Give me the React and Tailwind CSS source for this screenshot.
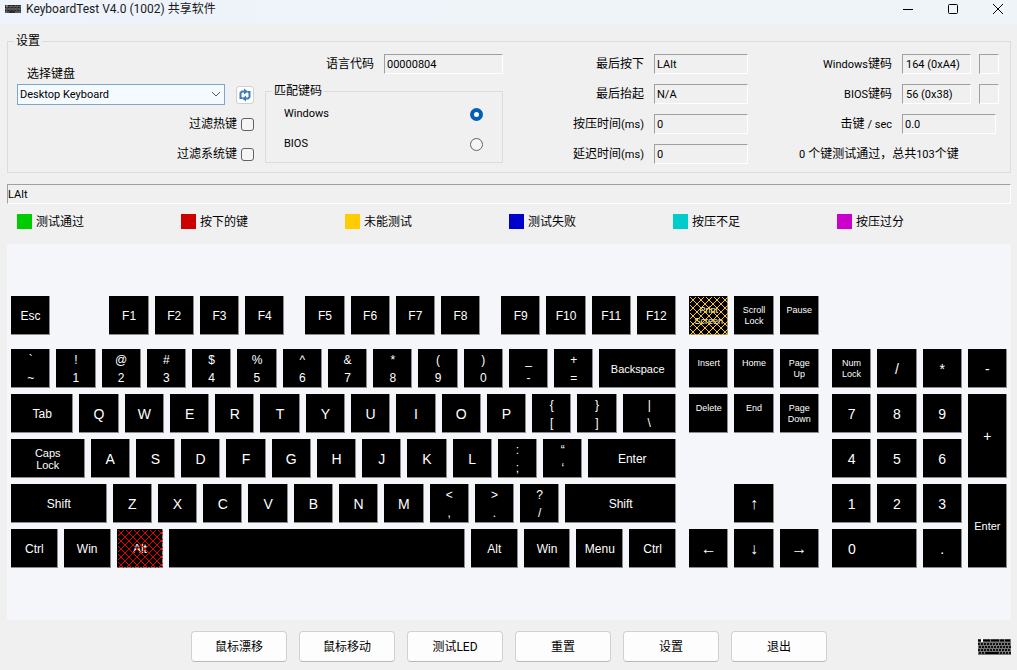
import { useState } from "react";
import clsx from "clsx";

const legend = [
  { label: "测试通过", color: "bg-[#00cc00]" },
  { label: "按下的键", color: "bg-[#cc0000]" },
  { label: "未能测试", color: "bg-[#ffcc00]" },
  { label: "测试失败", color: "bg-[#0000cc]" },
  { label: "按压不足", color: "bg-[#00cccc]" },
  { label: "按压过分", color: "bg-[#cc00cc]" },
];

const actions = ["鼠标漂移", "鼠标移动", "测试LED", "重置", "设置", "退出"];

// a key is { t: text, b: bottom text, w: width class, s: text size, hatch }
// a gap is { w } alone
const U = "flex-[39]";
const letters = (str) => str.split("").map((t) => ({ t, w: U, s: "text-sm" }));
const duals = (pairs) => pairs.map(([t, b]) => ({ t, b, w: U }));

const mainRows = [
  [
    { t: "Esc", w: U },
    { w: "flex-[47]" },
    { t: "F1", w: U },
    { t: "F2", w: U },
    { t: "F3", w: U },
    { t: "F4", w: U },
    { w: "flex-[9]" },
    { t: "F5", w: U },
    { t: "F6", w: U },
    { t: "F7", w: U },
    { t: "F8", w: U },
    { w: "flex-[9]" },
    { t: "F9", w: U },
    { t: "F10", w: U },
    { t: "F11", w: U },
    { t: "F12", w: U },
  ],
  [
    ...duals(["`~", "!1", "@2", "#3", "$4", "%5", "^6", "&7", "*8", "(9", ")0", "_-", "+="]),
    { t: "Backspace", w: "flex-[76]", s: "text-[11px]" },
  ],
  [
    { t: "Tab", w: "flex-[62]" },
    ...letters("QWERTYUIOP"),
    ...duals(["{[", "}]"]),
    { t: "|", b: "\\", w: "flex-[53]" },
  ],
  [
    { t: "Caps\nLock", w: "flex-[73]", s: "text-[11px]" },
    ...letters("ASDFGHJKL"),
    ...duals([":;", "“‘"]),
    { t: "Enter", w: "flex-[87]" },
  ],
  [
    { t: "Shift", w: "flex-[95]" },
    ...letters("ZXCVBNM"),
    ...duals(["<,", ">.", "?/"]),
    { t: "Shift", w: "flex-[110]" },
  ],
  [
    { t: "Ctrl", w: "flex-[47]" },
    { t: "Win", w: "flex-[47]" },
    { t: "Alt", w: "flex-[47]", hatch: "red" },
    { t: "", w: "flex-[297]" },
    { t: "Alt", w: "flex-[47]" },
    { t: "Win", w: "flex-[47]" },
    { t: "Menu", w: "flex-[47]" },
    { t: "Ctrl", w: "flex-[47]" },
  ],
];

const numpad = [
  { t: "Num\nLock", nav: true },
  { t: "/" },
  { t: "*" },
  { t: "-" },
  { t: "7" },
  { t: "8" },
  { t: "9" },
  { t: "+", w: "row-span-2" },
  { t: "4" },
  { t: "5" },
  { t: "6" },
  { t: "1" },
  { t: "2" },
  { t: "3" },
  { t: "Enter", w: "row-span-2", s: "text-[11px]" },
  { t: "0", w: "col-span-2", left: true },
  { t: "." },
];

const Hatch = ({ color }) => (
  <svg className="absolute inset-0 w-full h-full" aria-hidden="true">
    <defs>
      <pattern id={`hatch-${color}`} width="8" height="8" patternUnits="userSpaceOnUse">
        <path
          d="M-1 -1L9 9M9 -1L-1 9"
          stroke={color === "red" ? "#e00000" : "#ffcc00"}
          strokeWidth="1"
        />
      </pattern>
    </defs>
    <rect x="1" y="1" width="100%" height="100%" fill={`url(#hatch-${color})`} />
  </svg>
);

const Key = ({ k, className }) => (
  <div
    className={clsx(
      "relative flex min-w-0 min-h-[39px] justify-center overflow-hidden bg-black text-center text-white whitespace-pre shadow-[inset_-1px_-1px_#8c8c8c]",
      k.nav ? "items-start pt-[9px] text-[9px] leading-[11px]" : "items-center leading-3",
      !k.nav && (k.s || "text-xs"),
      k.left && "justify-start pl-4",
      k.w,
      className
    )}
  >
    {k.b ? (
      <span className="flex flex-col leading-[18px]">
        <span>{k.t}</span>
        <span>{k.b}</span>
      </span>
    ) : (
      <span>{k.t}</span>
    )}
    {k.hatch && <Hatch color={k.hatch} />}
  </div>
);

const NavKey = ({ t, hatch }) => <Key k={{ t, hatch, nav: true }} />;

const Field = ({ id, label, value, className, children }) => (
  <div className="flex h-5 items-center justify-end">
    <label htmlFor={id} className="mr-[10px] whitespace-nowrap">
      {label}
    </label>
    <Box id={id} value={value} className={className} />
    {children}
  </div>
);

const Box = ({ className, ...rest }) => (
  <input
    readOnly
    className={clsx(
      "h-5 border border-t-[#a0a0a0] border-l-[#a0a0a0] border-r-white border-b-white bg-transparent text-[11px] outline-none",
      className
    )}
    {...rest}
  />
);

const Lat = ({ children }) => <span className="text-[11px]">{children}</span>;

const Check = ({ id, label }) => (
  <label htmlFor={id} className="flex h-5 items-center justify-end gap-1">
    {label}
    <input
      id={id}
      type="checkbox"
      className="h-[13px] w-[13px] appearance-none rounded-[3px] border border-[#626262] bg-[#f5f5f5] checked:bg-[#005fb8]"
    />
  </label>
);

const Radio = ({ value, mode, setMode }) => (
  <label className="flex h-5 items-center justify-between text-[11px]">
    {value}
    <input
      type="radio"
      name="mode"
      value={value}
      checked={mode === value}
      onChange={() => setMode(value)}
      className="h-[13px] w-[13px] appearance-none rounded-full border border-[#626262] bg-[#f5f5f5] checked:border-4 checked:border-[#005fb8] checked:bg-white"
    />
  </label>
);

const KeyboardIcon = ({ className }) => (
  <svg viewBox="0 0 33 16" preserveAspectRatio="none" className={className} aria-hidden="true">
    <rect width="33" height="16" fill="#777" />
    <path d="M3 0h2v3H3z" fill="#fff" />
    <path d="M0 1.5H3M5 1.5H12M13 1.5H21M22 1.5H26M27 1.5H32" stroke="#000" strokeWidth="2" />
    <path
      d="M0 5H33M1 8H33M0 11H33M1 14H33"
      stroke="#111"
      strokeWidth="2"
      strokeDasharray="2 1"
    />
    <path d="M8 14H20" stroke="#000" strokeWidth="2" />
  </svg>
);

const TitleBar = () => (
  <header className="flex h-6 items-center bg-gradient-to-r from-[#eef3fc] via-[#eff4f9] to-[#eef4f8] pr-[11px] pb-[6px] pl-[5px]">
    <KeyboardIcon className="h-2 w-4" />
    <h1 className="ml-[5px] flex-1 text-xs leading-4 whitespace-nowrap text-[#1a1a1a]">
      KeyboardTest V4.0 (1002) 共享软件
    </h1>
    <div className="flex gap-[29px]">
      <button aria-label="最小化">
        <svg width="16" height="16" fill="none" stroke="#000">
          <path d="M3 8.5h10" />
        </svg>
      </button>
      <button aria-label="最大化">
        <svg width="16" height="16" fill="none" stroke="#000">
          <rect x="3.5" y="3.5" width="9" height="9" rx="1" />
        </svg>
      </button>
      <button aria-label="关闭">
        <svg width="16" height="16" fill="none" stroke="#000">
          <path d="M3 3l10 10M13 3L3 13" />
        </svg>
      </button>
    </div>
  </header>
);

const Settings = () => {
  const [mode, setMode] = useState("Windows");

  return (
    <fieldset className="min-w-0 border border-[#dcdcdc] pr-[11px] pb-[7px] pl-[9px]">
      <legend className="-ml-[3px] px-[2px] leading-[18px]">设置</legend>
      <div className="grid grid-cols-[248fr_301fr_225fr_208fr] pt-1">
        <div className="flex flex-col pt-[11px] pr-[11px]">
          <label htmlFor="keyboard" className="pl-[10px] leading-[19px]">
            选择键盘
          </label>
          <div className="flex items-center gap-[11px]">
            <div className="relative min-w-0 flex-1">
              <select
                id="keyboard"
                className="block h-[21px] w-full appearance-none border border-[#7aa7cf] bg-[#f5faff] pt-[2px] pl-[2px] text-[11px] outline-none"
              >
                <option>Desktop Keyboard</option>
              </select>
              <svg
                className="pointer-events-none absolute top-[7px] right-1 h-[7px] w-[10px]"
                viewBox="0 0 10 7"
                fill="none"
                stroke="#555"
                aria-hidden="true"
              >
                <path d="M1 1l4 4 4-4" />
              </svg>
            </div>
            <button
              aria-label="刷新"
              className="flex h-[18px] w-[18px] items-center justify-center rounded-[3px] border border-[#d0d0d0] bg-[#fdfdfd]"
            >
              <svg width="14" height="14" viewBox="0 0 14 14" fill="none" stroke="#3f7cb8" strokeWidth="2">
                <path d="M4.5 10H2.5V5L4 3.5H7M9.5 4H11.5V9L10 10.5H7" />
                <path d="M6 0.5L10 3.5L6 6.5zM8 7.5L4 10.5L8 13.5z" fill="#3f7cb8" stroke="none" />
              </svg>
            </button>
          </div>
          <div className="mt-[9px] flex flex-col gap-[10px]">
            <Check id="hot" label="过滤热键" />
            <Check id="system" label="过滤系统键" />
          </div>
        </div>

        <div className="pr-[63px]">
          <Field id="lang" label="语言代码" value="00000804" className="w-[119px] pl-[2px]" />
          <fieldset className="mt-[9px] min-w-0 border border-[#dcdcdc] pr-[19px] pb-2 pl-[18px]">
            <legend className="-ml-3 px-[2px] leading-4">匹配键码</legend>
            <div className="flex flex-col gap-[10px] pt-[5px]">
              <Radio value="Windows" mode={mode} setMode={setMode} />
              <Radio value="BIOS" mode={mode} setMode={setMode} />
            </div>
          </fieldset>
        </div>

        <div className="flex flex-col gap-[10px] pr-[43px]">
          <Field id="down" label="最后按下" value="LAlt" className="w-[94px] pl-[2px]" />
          <Field id="up" label="最后抬起" value="N/A" className="w-[94px] pl-[2px]" />
          <Field id="press" label={<>按压时间<Lat>(ms)</Lat></>} value="0" className="w-[94px] pl-[2px]" />
          <Field id="delay" label={<>延迟时间<Lat>(ms)</Lat></>} value="0" className="w-[94px] pl-[2px]" />
        </div>

        <div className="flex flex-col gap-[10px]">
          <Field id="win" label={<><Lat>Windows</Lat>键码</>} value="164 (0xA4)" className="w-[69px] pl-[3px]">
            <Box aria-label="Windows键码状态" className="ml-2 w-5" />
          </Field>
          <Field id="bios" label={<><Lat>BIOS</Lat>键码</>} value="56 (0x38)" className="w-[69px] pl-[3px]">
            <Box aria-label="BIOS键码状态" className="ml-2 w-5" />
          </Field>
          <Field id="rate" label={<>击键 <Lat>/ sec</Lat></>} value="0.0" className="mr-[3px] w-[94px] pl-[2px]" />
          <p className="pl-2 leading-5 whitespace-nowrap">
            <Lat>0</Lat> 个键测试通过，总共<Lat>103</Lat>个键
          </p>
        </div>
      </div>
    </fieldset>
  );
};

const Keyboard = () => (
  <section className="mt-[15px] grid grid-cols-[665fr_130fr_175fr] gap-[13px] bg-[#f4f6f9] px-1 py-[52px] font-['Liberation_Sans',Arial,sans-serif]">
    <div className="flex flex-col gap-[6px]">
      {mainRows.map((row, i) => (
        <div key={i} className={clsx("flex gap-[6px]", i === 0 && "mb-2")}>
          {row.map((k, j) =>
            k.t === undefined ? <div key={j} className={k.w} /> : <Key key={j} k={k} />
          )}
        </div>
      ))}
    </div>

    <div className="flex flex-col">
      <div className="mb-[14px] grid grid-cols-3 gap-[6px]">
        <NavKey t={"Print\nScreen"} hatch="yellow" />
        <NavKey t={"Scroll\nLock"} />
        <NavKey t="Pause" />
      </div>
      <div className="grid grid-cols-3 gap-[6px]">
        <NavKey t="Insert" />
        <NavKey t="Home" />
        <NavKey t={"Page\nUp"} />
        <NavKey t="Delete" />
        <NavKey t="End" />
        <NavKey t={"Page\nDown"} />
      </div>
      <div className="mt-[51px] grid grid-cols-3 gap-[6px]">
        <Key k={{ t: "↑", s: "text-base" }} className="col-start-2" />
        <Key k={{ t: "←", s: "text-base" }} className="col-start-1" />
        <Key k={{ t: "↓", s: "text-base" }} />
        <Key k={{ t: "→", s: "text-base" }} />
      </div>
    </div>

    <div className="grid grid-cols-4 content-start gap-[6px] pt-[53px]">
      {numpad.map((k, i) => (
        <Key key={i} k={{ s: "text-sm", ...k }} />
      ))}
    </div>
  </section>
);

export default function App() {
  return (
    <div className="min-h-screen bg-[#f0f0f0] font-[Roboto,'Noto_Sans_CJK_SC',sans-serif] text-xs text-black">
      <TitleBar />
      <main className="pt-2 pr-[6px] pl-[7px]">
        <Settings />
        <Box aria-label="按键记录" value="LAlt" className="mt-[11px] block w-full" />
        <ul className="mt-[10px] grid grid-cols-6 px-[10px]">
          {legend.map(({ label, color }) => (
            <li key={label} className="flex h-[15px] items-center gap-1 whitespace-nowrap">
              <span className={clsx("h-[15px] w-[15px]", color)} />
              {label}
            </li>
          ))}
        </ul>
        <Keyboard />
        <footer className="grid grid-cols-[1fr_auto_1fr] items-center pt-[11px] pb-2">
          <div className="col-start-2 flex gap-3">
            {actions.map((label) => (
              <button
                key={label}
                className="h-[31px] w-24 rounded border border-[#d0d0d0] border-b-[#bababa] bg-[#fdfdfd]"
              >
                {label}
              </button>
            ))}
          </div>
          <KeyboardIcon className="h-4 w-[33px] justify-self-end" />
        </footer>
      </main>
    </div>
  );
}
